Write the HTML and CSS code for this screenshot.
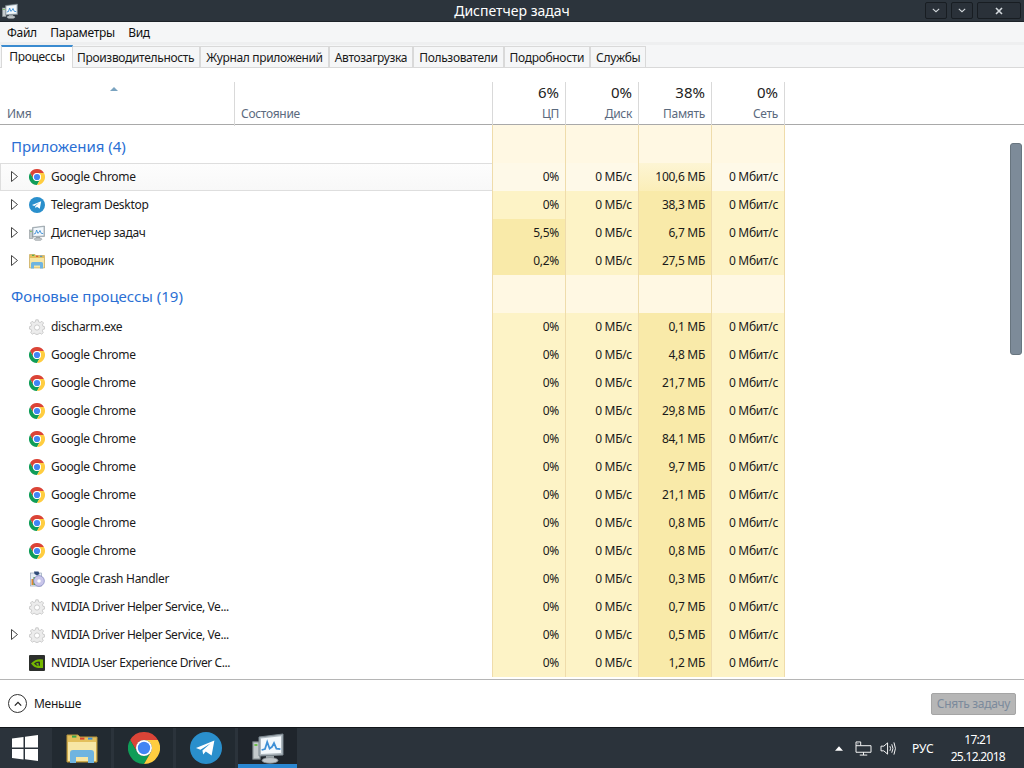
FILE: index.html
```html
<!DOCTYPE html>
<html lang="ru">
<head>
<meta charset="utf-8">
<title>Диспетчер задач</title>
<link rel="stylesheet" href="styles.css">
</head>
<body>
<svg class="sprite" width="0" height="0" aria-hidden="true">
  <symbol id="i-chrome" viewBox="0 0 16 16">
    <path fill="#db4437" d="M14.93 4A8 8 0 0 0 1.07 4L4.54 10A4 4 0 0 1 8 4Z"/>
    <path fill="#0f9d58" d="M1.07 4A8 8 0 0 0 8 16L11.46 10A4 4 0 0 1 4.54 10Z"/>
    <path fill="#ffcd40" d="M8 16A8 8 0 0 0 14.93 4L8 4A4 4 0 0 1 11.46 10Z"/>
    <circle cx="8" cy="8" r="4" fill="#fff"/>
    <circle cx="8" cy="8" r="3.1" fill="#4285f4"/>
  </symbol>
  <symbol id="i-tg" viewBox="0 0 16 16">
    <circle cx="8" cy="8" r="8" fill="#2a8fcc"/>
    <path fill="#fff" d="M3 8L12.2 4.2L10.8 11.8L7.9 9.8L6.6 11.2L6.2 9.2L10.2 5.8L5.2 8.9Z"/>
  </symbol>
  <symbol id="i-tm" viewBox="0 0 16 16">
    <rect x="0.5" y="5" width="3.5" height="8.5" fill="#c4cacc" stroke="#8d9598" stroke-width=".6"/>
    <rect x="1.2" y="6" width="1.5" height="1" fill="#6fc04a"/>
    <path fill="#aeb8bf" stroke="#7b868e" stroke-width=".5" d="M3.5 2.5L15.5 1V11.5L3.5 12Z"/>
    <path fill="#f3f8fc" d="M4.5 3.3L14.5 2.1V10.5L4.5 11Z"/>
    <path fill="none" stroke="#3d8fd6" stroke-width=".9" d="M4.8 9L6.5 8.5L7.6 5L8.8 8.3L10 7.4L11 5.5L12.2 8.3L14.2 8.6"/>
    <rect x="7" y="12" width="4" height="1.2" fill="#9aa3a8"/>
    <ellipse cx="9" cy="14.2" rx="4" ry="1.4" fill="#bfc5c9" stroke="#858d92" stroke-width=".4"/>
  </symbol>
  <symbol id="i-folder" viewBox="0 0 16 16">
    <path fill="#e3bf5c" stroke="#b8963f" stroke-width=".5" d="M.5 1.5H6L7 2.5H15.5V15H.5Z"/>
    <rect x="3" y="1.8" width="2.2" height="1" fill="#37a84c"/>
    <rect x="7" y="2.8" width="2.2" height="1" fill="#d5442f"/>
    <rect x="11" y="2.8" width="2.2" height="1" fill="#3d8fd6"/>
    <path fill="#f7e6a5" d="M1 5H15V14.5H1Z"/>
    <path fill="#6fb4e0" d="M2 15.5V10.5Q2 9 3.5 9H12.5Q14 9 14 10.5V15.5H11V12.5H5V15.5Z"/>
  </symbol>
  <symbol id="i-gear" viewBox="0 0 16 16">
    <path fill="#ececec" stroke="#c3c3c3" stroke-width=".8" d="M6.8.8H9.2L9.6 2.9L11.1 3.5L12.9 2.3L14.6 4L13.4 5.8L14 7.3L15.6 7.7V10L13.9 10.4L13.3 11.9L14.3 13.6L12.6 15.2L11 14.1L9.6 14.7L9.2 15.4H6.8L6.4 14.7L5 14.1L3.4 15.2L1.7 13.6L2.7 11.9L2.1 10.4L.4 10V7.7L2 7.3L2.6 5.8L1.4 4L3.1 2.3L4.9 3.5L6.4 2.9Z"/>
    <circle cx="8" cy="8.5" r="2.6" fill="#fff" stroke="#c3c3c3" stroke-width=".8"/>
  </symbol>
  <symbol id="i-crash" viewBox="0 0 16 16">
    <rect x="1.5" y="2" width="11" height="13" fill="#e6edf5" stroke="#8898ad" stroke-width=".6"/>
    <rect x="2.5" y="8" width="2" height="6" fill="#e0862f"/>
    <rect x="4.5" y="6" width="2" height="8" fill="#4f9a3b"/>
    <circle cx="10" cy="10" r="5.4" fill="#c9c6ea" stroke="#6f75b5" stroke-width=".6"/>
    <circle cx="10" cy="10" r="1.8" fill="#fff"/>
    <path fill="#2f4b78" d="M5 .5L9.5 .5L10.5 3L8 4.5L5.5 3Z"/>
  </symbol>
  <symbol id="i-nv" viewBox="0 0 16 16">
    <rect width="16" height="16" rx="1" fill="#2c2f2c"/>
    <path fill="#76b900" d="M2 8.5Q7 3 14 4.5V13H9Q5 12.5 2 8.5Z"/>
    <path fill="#2c2f2c" d="M5 8.5Q7.5 6 11 6.7V10.8H9.6V8.3Q8 7.8 7 8.7Q8 9.8 9 10.8H7.8Q6.2 10 5 8.5Z"/>
  </symbol>
  <symbol id="i-arrow" viewBox="0 0 9 13">
    <path fill="#fff" stroke="#444" d="M1.5 1.5L7.5 6.5L1.5 11.5Z"/>
  </symbol>
</svg>

<div class="window">
  <header class="titlebar">
    <svg class="title-icon"><use href="#i-tm"/></svg>
    <span class="title-text">Диспетчер задач</span>
    <div class="win-buttons">
      <button class="win-btn"><svg viewBox="0 0 10 6" class="chev"><path d="M1 1L5 4.5L9 1"/></svg></button>
      <button class="win-btn"><svg viewBox="0 0 10 6" class="chev"><path d="M1 1L5 4.5L9 1"/></svg></button>
      <button class="win-btn win-close"><svg viewBox="0 0 10 10" class="cross"><path d="M2 2L8 8M8 2L2 8"/></svg></button>
    </div>
  </header>
  <nav class="menu"><span>Файл</span><span>Параметры</span><span>Вид</span></nav>
  <div class="tabs">
    <span class="tab tab-active">Процессы</span>
    <span class="tab">Производительность</span>
    <span class="tab">Журнал приложений</span>
    <span class="tab">Автозагрузка</span>
    <span class="tab">Пользователи</span>
    <span class="tab">Подробности</span>
    <span class="tab">Службы</span>
  </div>

  <div class="table-head">
    <div class="th th-name"><span class="sort"></span><span class="th-label">Имя</span></div>
    <div class="th th-state"><span class="th-label">Состояние</span></div>
    <div class="th th-num"><span class="th-val">6%</span><span class="th-label">ЦП</span></div>
    <div class="th th-num"><span class="th-val">0%</span><span class="th-label">Диск</span></div>
    <div class="th th-num"><span class="th-val">38%</span><span class="th-label">Память</span></div>
    <div class="th th-num"><span class="th-val">0%</span><span class="th-label">Сеть</span></div>
  </div>

  <div class="table-wrap">
    <div class="scrollbar"></div>
    <div class="table">
      <div class="group"><div class="group-name">Приложения (4)</div><i></i><i></i><i></i><i></i></div>
      <div class="row row-hover">
        <div class="name"><svg class="arrow"><use href="#i-arrow"/></svg><svg class="ico"><use href="#i-chrome"/></svg><span>Google Chrome</span></div>
        <div class="c c0">0%</div><div class="c c0">0 МБ/с</div><div class="c m0">100,6 МБ</div><div class="c c0">0 Мбит/с</div>
      </div>
      <div class="row">
        <div class="name"><svg class="arrow"><use href="#i-arrow"/></svg><svg class="ico"><use href="#i-tg"/></svg><span>Telegram Desktop</span></div>
        <div class="c c1">0%</div><div class="c c1">0 МБ/с</div><div class="c m1">38,3 МБ</div><div class="c c1">0 Мбит/с</div>
      </div>
      <div class="row">
        <div class="name"><svg class="arrow"><use href="#i-arrow"/></svg><svg class="ico"><use href="#i-tm"/></svg><span>Диспетчер задач</span></div>
        <div class="c m1">5,5%</div><div class="c c1">0 МБ/с</div><div class="c m1">6,7 МБ</div><div class="c c1">0 Мбит/с</div>
      </div>
      <div class="row">
        <div class="name"><svg class="arrow"><use href="#i-arrow"/></svg><svg class="ico"><use href="#i-folder"/></svg><span>Проводник</span></div>
        <div class="c m1">0,2%</div><div class="c c1">0 МБ/с</div><div class="c m1">27,5 МБ</div><div class="c c1">0 Мбит/с</div>
      </div>
      <div class="group"><div class="group-name">Фоновые процессы (19)</div><i></i><i></i><i></i><i></i></div>
      <div class="row">
        <div class="name"><svg class="ico ind"><use href="#i-gear"/></svg><span>discharm.exe</span></div>
        <div class="c c1">0%</div><div class="c c1">0 МБ/с</div><div class="c m1">0,1 МБ</div><div class="c c1">0 Мбит/с</div>
      </div>
      <div class="row">
        <div class="name"><svg class="ico ind"><use href="#i-chrome"/></svg><span>Google Chrome</span></div>
        <div class="c c1">0%</div><div class="c c1">0 МБ/с</div><div class="c m1">4,8 МБ</div><div class="c c1">0 Мбит/с</div>
      </div>
      <div class="row">
        <div class="name"><svg class="ico ind"><use href="#i-chrome"/></svg><span>Google Chrome</span></div>
        <div class="c c1">0%</div><div class="c c1">0 МБ/с</div><div class="c m1">21,7 МБ</div><div class="c c1">0 Мбит/с</div>
      </div>
      <div class="row">
        <div class="name"><svg class="ico ind"><use href="#i-chrome"/></svg><span>Google Chrome</span></div>
        <div class="c c1">0%</div><div class="c c1">0 МБ/с</div><div class="c m1">29,8 МБ</div><div class="c c1">0 Мбит/с</div>
      </div>
      <div class="row">
        <div class="name"><svg class="ico ind"><use href="#i-chrome"/></svg><span>Google Chrome</span></div>
        <div class="c c1">0%</div><div class="c c1">0 МБ/с</div><div class="c m1">84,1 МБ</div><div class="c c1">0 Мбит/с</div>
      </div>
      <div class="row">
        <div class="name"><svg class="ico ind"><use href="#i-chrome"/></svg><span>Google Chrome</span></div>
        <div class="c c1">0%</div><div class="c c1">0 МБ/с</div><div class="c m1">9,7 МБ</div><div class="c c1">0 Мбит/с</div>
      </div>
      <div class="row">
        <div class="name"><svg class="ico ind"><use href="#i-chrome"/></svg><span>Google Chrome</span></div>
        <div class="c c1">0%</div><div class="c c1">0 МБ/с</div><div class="c m1">21,1 МБ</div><div class="c c1">0 Мбит/с</div>
      </div>
      <div class="row">
        <div class="name"><svg class="ico ind"><use href="#i-chrome"/></svg><span>Google Chrome</span></div>
        <div class="c c1">0%</div><div class="c c1">0 МБ/с</div><div class="c m1">0,8 МБ</div><div class="c c1">0 Мбит/с</div>
      </div>
      <div class="row">
        <div class="name"><svg class="ico ind"><use href="#i-chrome"/></svg><span>Google Chrome</span></div>
        <div class="c c1">0%</div><div class="c c1">0 МБ/с</div><div class="c m1">0,8 МБ</div><div class="c c1">0 Мбит/с</div>
      </div>
      <div class="row">
        <div class="name"><svg class="ico ind"><use href="#i-crash"/></svg><span>Google Crash Handler</span></div>
        <div class="c c1">0%</div><div class="c c1">0 МБ/с</div><div class="c m1">0,3 МБ</div><div class="c c1">0 Мбит/с</div>
      </div>
      <div class="row">
        <div class="name"><svg class="ico ind"><use href="#i-gear"/></svg><span class="tight">NVIDIA Driver Helper Service, Ve...</span></div>
        <div class="c c1">0%</div><div class="c c1">0 МБ/с</div><div class="c m1">0,7 МБ</div><div class="c c1">0 Мбит/с</div>
      </div>
      <div class="row">
        <div class="name"><svg class="arrow"><use href="#i-arrow"/></svg><svg class="ico"><use href="#i-gear"/></svg><span class="tight">NVIDIA Driver Helper Service, Ve...</span></div>
        <div class="c c1">0%</div><div class="c c1">0 МБ/с</div><div class="c m1">0,5 МБ</div><div class="c c1">0 Мбит/с</div>
      </div>
      <div class="row">
        <div class="name"><svg class="ico ind"><use href="#i-nv"/></svg><span class="tight">NVIDIA User Experience Driver C...</span></div>
        <div class="c c1">0%</div><div class="c c1">0 МБ/с</div><div class="c m1">1,2 МБ</div><div class="c c1">0 Мбит/с</div>
      </div>
    </div>
  </div>

  <footer class="footer">
    <div class="less">
      <span class="less-btn"><svg viewBox="0 0 10 7" class="less-chev"><path d="M1 5.5L5 1.5L9 5.5"/></svg></span>
      <span>Меньше</span>
    </div>
    <button class="end-task">Снять задачу</button>
  </footer>
</div>

<div class="taskbar">
  <div class="tb-item tb-start">
    <svg viewBox="0 0 26 26" class="winlogo"><path d="M0 3.5L11.5 2V12.5H0ZM13 1.8L26 0V12.5H13ZM0 14H11.5V24.5L0 23ZM13 14H26V26L13 24.3Z"/></svg>
  </div>
  <div class="tb-item"><svg class="tb-ico"><use href="#i-folder"/></svg></div>
  <div class="tb-item"><svg class="tb-ico"><use href="#i-chrome"/></svg></div>
  <div class="tb-item"><svg class="tb-ico"><use href="#i-tg"/></svg></div>
  <div class="tb-item tb-active"><svg class="tb-ico"><use href="#i-tm"/></svg></div>
  <div class="tray">
    <svg viewBox="0 0 9 5" class="tray-up"><path d="M0 5L4.5 0L9 5Z"/></svg>
    <svg viewBox="0 0 18 16" class="tray-net"><path d="M1 1H6V5H17V12H1ZM1 5H6M9 12V15M5 15H13M3 2.5V3.5"/></svg>
    <svg viewBox="0 0 18 16" class="tray-vol"><path d="M1 5.5H4L8 2V14L4 10.5H1ZM10.5 5.5Q12 8 10.5 10.5M12.5 3.5Q15 8 12.5 12.5M14.8 1.5Q18 8 14.8 14.5"/></svg>
    <span class="lang">РУС</span>
    <div class="clock"><span>17:21</span><span>25.12.2018</span></div>
  </div>
</div>
</body>
</html>
```

FILE: styles.css
```css
* { box-sizing: border-box; }
html, body { margin: 0; padding: 0; }
body {
  width: 1024px;
  height: 768px;
  overflow: hidden;
  background: #fff;
  font-family: "Noto Sans", "Open Sans", sans-serif;
  font-size: 12px;
  letter-spacing: -0.3px;
  color: #1a1a1a;
  display: flex;
  flex-direction: column;
}
.sprite { position: absolute; }

.window { flex: 1; display: flex; flex-direction: column; min-height: 0; }

.titlebar {
  height: 22px;
  flex: none;
  background: #2c343c;
  border-bottom: 1px solid #1d2329;
  display: flex;
  align-items: center;
  justify-content: center;
  position: relative;
  letter-spacing: 0;
}
.title-icon { position: absolute; left: 2px; top: 3px; width: 16px; height: 16px; }
.title-text { color: #fff; font-size: 14px; }
.win-buttons { position: absolute; right: 3px; top: 2px; display: flex; gap: 4px; }
.win-btn {
  width: 22px;
  height: 17px;
  padding: 0;
  background: #2a3139;
  border: 1px solid #181d22;
  border-radius: 2px;
  display: flex;
  align-items: center;
  justify-content: center;
}
.win-close { width: 44px; }
.chev { width: 8px; height: 5px; fill: none; stroke: #d5dade; stroke-width: 1.3; }
.cross { width: 10px; height: 10px; fill: none; stroke: #d5dade; stroke-width: 1.6; }

.menu {
  height: 20px;
  flex: none;
  background: #f5f6f7;
  display: flex;
  align-items: center;
  gap: 13.5px;
  padding-left: 7px;
  color: #111;
}

.tabs {
  height: 26px;
  flex: none;
  background: #f5f6f7;
  border-top: 3px solid #eeeff0;
  display: flex;
  align-items: flex-end;
  padding-left: 1px;
  border-bottom: 1px solid #d9d9d9;
  letter-spacing: -0.33px;
}
.tab {
  height: 21px;
  padding: 0 5px;
  background: #f5f6f7;
  border: 1px solid #d9d9d9;
  border-bottom: none;
  display: flex;
  align-items: center;
  white-space: nowrap;
}
.tab-active {
  width: 72px;
  height: 23px;
  background: #fff;
  border-top: 2px solid #3a8bd0;
  padding: 0 0 2px;
  justify-content: center;
  margin: 0 -2px -1px 0;
  position: relative;
  z-index: 1;
}

.table-head {
  height: 57px;
  flex: none;
  display: grid;
  grid-template-columns: 235px 257px 73px 73px 73px 74px;
  border-bottom: 1px solid #a9a9a9;
  padding-top: 14px;
}
.th {
  display: flex;
  flex-direction: column;
  justify-content: flex-end;
  padding: 0 6px 4px;
  color: #5b6a7e;
  position: relative;
}
.th-name { border-right: 1px solid #d9d9d9; padding-left: 7px; }
.th-num { text-align: right; border-left: 1px solid #d9d9d9; }
.th-num:last-child { border-right: 1px solid #d9d9d9; }
.th-val { font-size: 15px; letter-spacing: 0; color: #222; line-height: 20px; margin-bottom: 3px; }
.th-label { line-height: 17px; }
.sort {
  position: absolute;
  left: 110px;
  top: 5px;
  width: 0;
  height: 0;
  border-left: 4px solid transparent;
  border-right: 4px solid transparent;
  border-bottom: 4px solid #7aa3c0;
}

.table-wrap { flex: 1; min-height: 0; position: relative; overflow: hidden; border-bottom: 1px solid #b5b5b5; }
.scrollbar {
  position: absolute;
  right: 2px;
  top: 18px;
  width: 12px;
  height: 212px;
  background: #7d8b99;
  border: 1px solid #68757f;
  border-radius: 3px;
}
.table { width: 785px; }
.group, .row {
  display: grid;
  grid-template-columns: 492px repeat(4, 73px);
}
.group { height: 38px; }
.group i {
  background: #fff8e3;
  border-left: 1px solid #efdcab;
}
.group i:last-child { box-shadow: 1px 0 0 #efdcab; }
.group-name {
  color: #2b6fd4;
  font-size: 15px;
  letter-spacing: 0;
  padding: 11px 0 0 11px;
}
.row { height: 28px; }
.row-hover .name {
  background: linear-gradient(#fdfdfd, #f8f8f8);
  box-shadow: inset 0 1px 0 #dedede, inset 0 -1px 0 #dedede, inset 1px 0 0 #dedede;
}
.name { display: flex; align-items: center; padding: 0 0 1px 10px; white-space: nowrap; overflow: hidden; }
.tight { letter-spacing: -0.42px; }
.arrow { width: 9px; height: 13px; flex: none; margin-right: 10px; }
.ico { width: 16px; height: 16px; flex: none; margin-right: 6px; }
.ind { margin-left: 19px; }
.c {
  text-align: right;
  padding: 0 6px;
  line-height: 27px;
  border-left: 1px solid #efdcab;
  white-space: nowrap;
}
.c:last-child { box-shadow: 1px 0 0 #efdcab; }
.c0 { background: #fef9e8; }
.c1 { background: #fdf3c6; }
.m0 { background: linear-gradient(#fdf5d4, #fbeeb8); }
.m1 { background: #f9eaa9; }

.footer {
  height: 47px;
  flex: none;
  display: flex;
  align-items: center;
  justify-content: space-between;
  padding: 0 8px;
}
.less { display: flex; align-items: center; gap: 7px; }
.less-btn {
  width: 19px;
  height: 19px;
  border: 1px solid #333;
  border-radius: 50%;
  display: flex;
  align-items: center;
  justify-content: center;
}
.less-chev { width: 8px; height: 6px; fill: none; stroke: #222; stroke-width: 1.6; }
.end-task {
  width: 85px;
  height: 22px;
  background: #b6b6b6;
  border: 1px solid #a5a5a5;
  border-radius: 2px;
  color: #7b8a9c;
  font: inherit;
  letter-spacing: -0.3px;
  padding: 0;
}

.taskbar {
  height: 41px;
  flex: none;
  background: #2b333b;
  border-top: 1px solid #12161a;
  display: flex;
  gap: 3px;
  letter-spacing: 0;
}
.tb-item {
  width: 59px;
  display: flex;
  align-items: center;
  justify-content: center;
  background: #222a31;
}
.tb-start { width: 49px; background: #2b333b; }
.tb-active { background: #1f252c; border-bottom: 4px solid #2a86d1; }
.tb-active .tb-ico { margin-bottom: -4px; }
.tb-ico { width: 32px; height: 32px; }
.winlogo { width: 26px; height: 26px; fill: #fff; }
.tray { margin-left: auto; display: flex; align-items: center; color: #fff; padding-right: 19px; }
.tray-up { width: 8px; height: 5px; fill: #fff; margin-right: 12px; }
.tray-net { width: 17px; height: 15px; fill: none; stroke: #fff; stroke-width: 1; margin-right: 8px; }
.tray-vol { width: 17px; height: 15px; fill: none; stroke: #fff; stroke-width: 1; margin-right: 15px; }
.lang { margin-right: 17px; }
.clock { display: flex; flex-direction: column; align-items: center; line-height: 17px; letter-spacing: -0.7px; }
```
